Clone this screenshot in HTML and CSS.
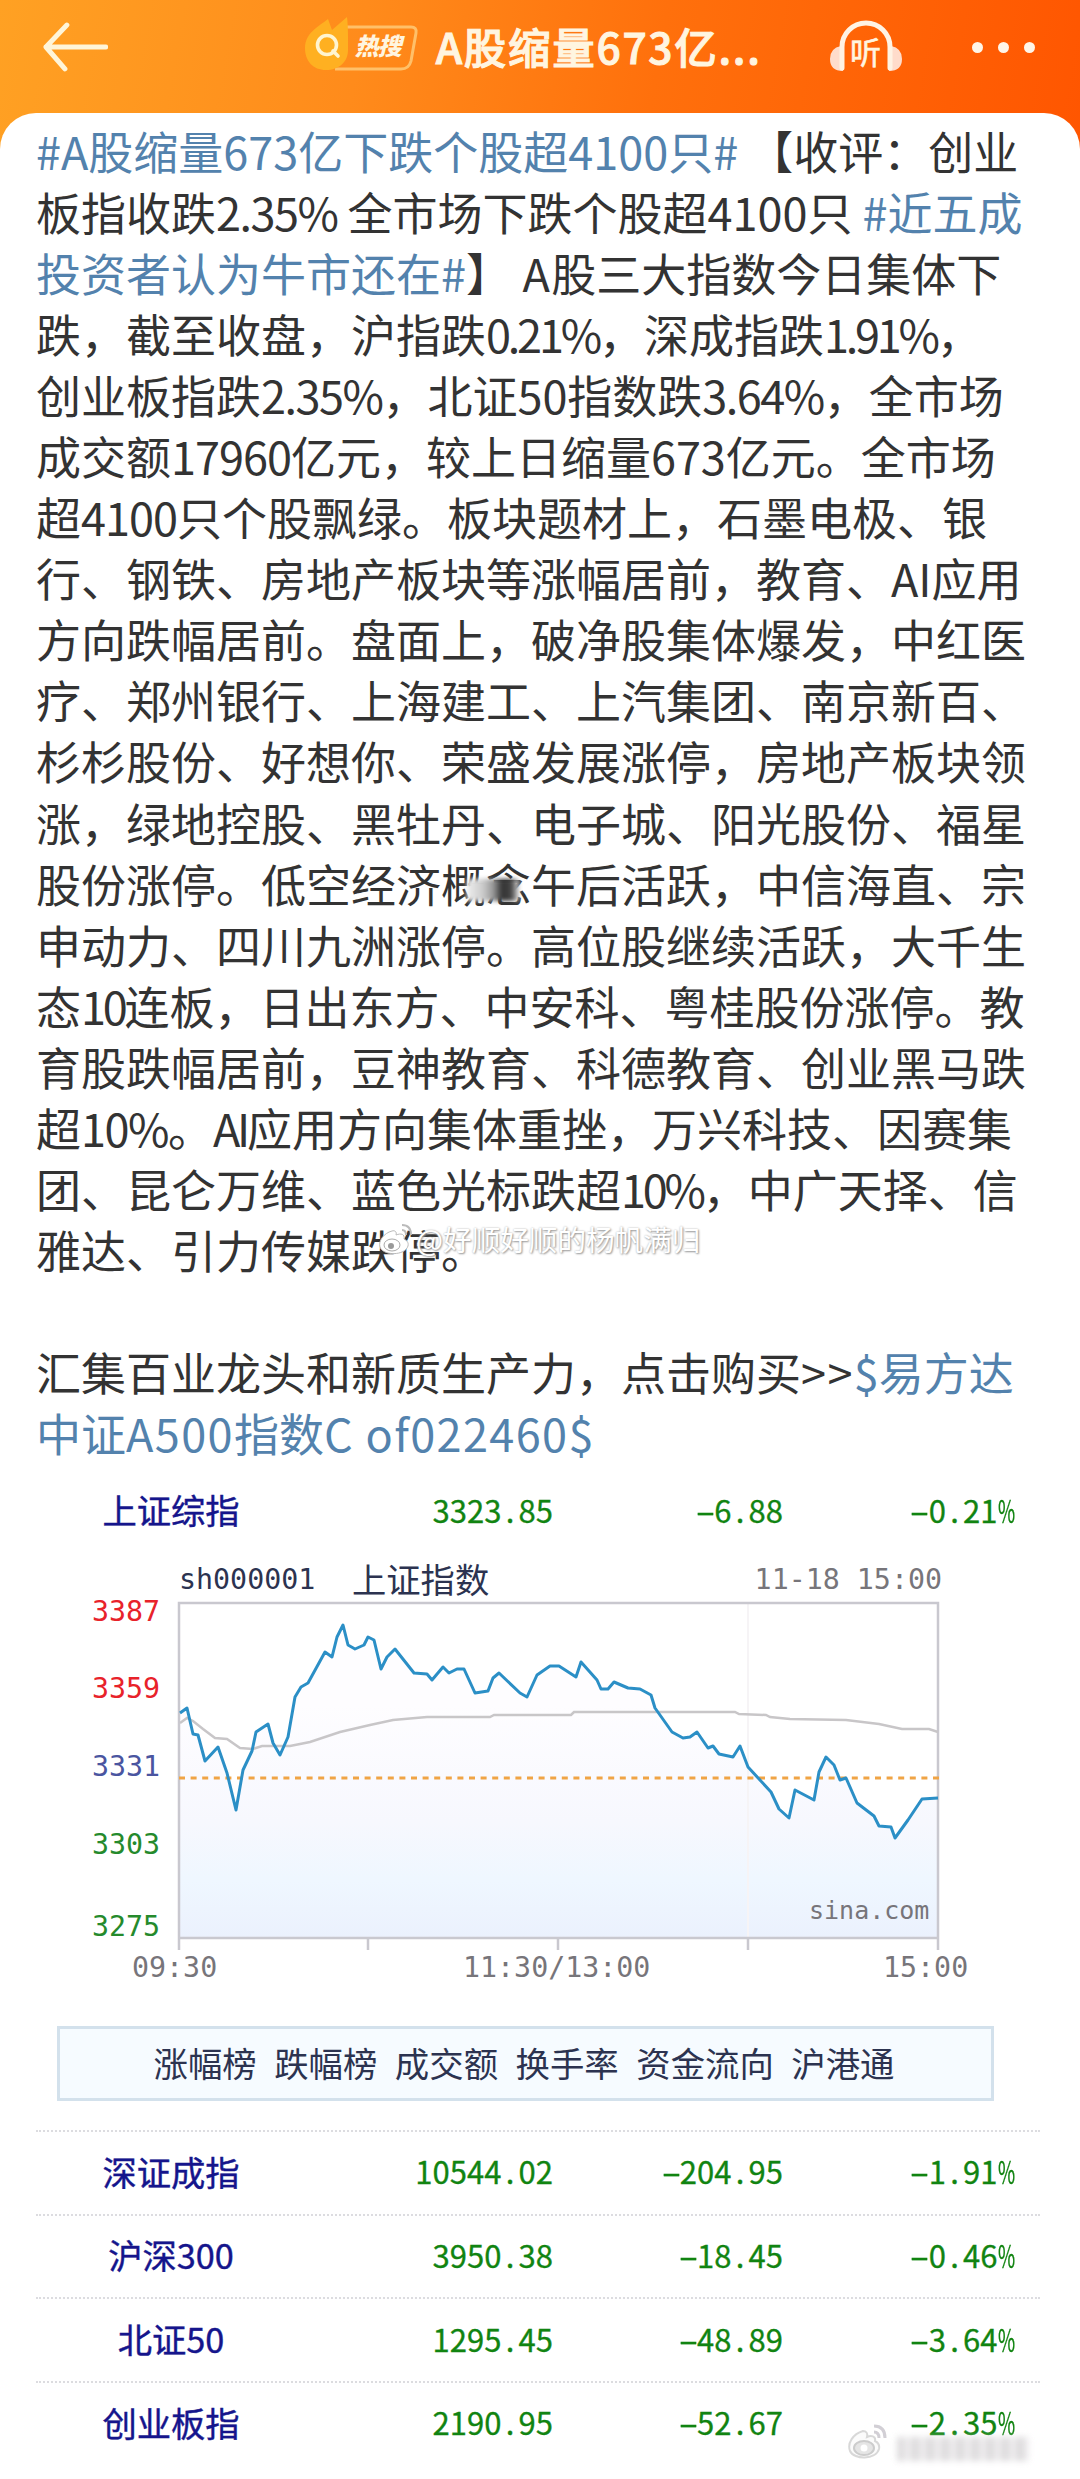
FILE: index.html
```html
<!DOCTYPE html>
<html lang="zh-CN">
<head>
    <meta charset="UTF-8">
    <meta name="viewport" content="width=device-width, initial-scale=1.0">
    <title>A股缩量673亿</title>
    <link rel="stylesheet" href="styles.css">
</head>
<body>

    <header class="topbar">
        <svg class="back" width="66" height="52" viewBox="0 0 66 52">
            <path d="M25 4 4 26l19 22M4 26h60" fill="none" stroke="#fff5d8" stroke-width="5" stroke-linecap="round" stroke-linejoin="round"/>
        </svg>
        <div class="hot">
            <svg width="114" height="56" viewBox="0 0 114 56">
                <path d="M40 11h66q6 0 5 6l-5 28q-2 8-10 8H30" fill="none" stroke="#ffc069" stroke-width="3"/>
                <path d="M23 3 27 14 42 1q1 8 1 20v13C43 46 34 54 21 54S0 45 0 32C0 17 13 11 23 3z" fill="#ffb021"/>
                <circle cx="22" cy="29" r="9.5" fill="none" stroke="#fff5d0" stroke-width="3.6"/>
                <path d="m28 35 5 5" stroke="#fff5d0" stroke-width="3.6" stroke-linecap="round"/>
            </svg>
            <span>热搜</span>
        </div>
        <h1>A股缩量673亿...</h1>
        <div class="listen">
            <svg width="74" height="56" viewBox="0 0 74 56">
                <path d="M12 28q-11 2-11 13 0 12 13 12zM62 28q11 2 11 13 0 12-13 12z" fill="#ffdccb"/>
                <path d="M13 50V29a24 24 0 0 1 48 0v21" fill="none" stroke="#fff3e4" stroke-width="5" stroke-linecap="round"/>
            </svg>
            <span>听</span>
        </div>
        <div class="more"><i></i><i></i><i></i></div>
    </header>

    <main class="sheet">
        <div class="post">
            <p><a>#A股缩量673亿下跌个股超4100只#</a> 【收评：创业</p>
            <p>板指收跌<b class="pct">2.35%</b> 全市场下跌个股超4100只 <a>#近五成</a></p>
            <p><a>投资者认为牛市还在#</a>】<b class="wide"> A</b>股三大指数今日集体下</p>
            <p>跌，截至收盘，沪指跌<b class="tight">0.21%</b>，深成指跌<b class="tight">1.91%</b>，</p>
            <p>创业板指跌<b class="pct">2.35%</b>，北证50指数跌<b class="pct">3.64%</b>，全市场</p>
            <p>成交额<b class="num1">17960</b>亿元，较上日缩量673亿元。全市场</p>
            <p>超<b class="num1">4100</b>只个股飘绿。板块题材上，石墨电极、银</p>
            <p>行、钢铁、房地产板块等涨幅居前，教育、AI应用</p>
            <p>方向跌幅居前。盘面上，破净股集体爆发，中红医</p>
            <p>疗、郑州银行、上海建工、上汽集团、南京新百、</p>
            <p>杉杉股份、好想你、荣盛发展涨停，房地产板块领</p>
            <p>涨，绿地控股、黑牡丹、电子城、阳光股份、福星</p>
            <p>股份涨停。低空经济<span class="smudge">概念</span>午后活跃，中信海直、宗</p>
            <p>申动力、四川九洲涨停。高位股继续活跃，大千生</p>
            <p>态<b class="tight">10</b>连板，日出东方、中安科、粤桂股份涨停。教</p>
            <p>育股跌幅居前，豆神教育、科德教育、创业黑马跌</p>
            <p>超<b class="pct">10%</b>。<b class="tight">AI</b>应用方向集体重挫，万兴科技、因赛集</p>
            <p>团、昆仑万维、蓝色光标跌超<b class="tight">10%</b>，中广天择、信</p>
            <p>雅达、引力传媒跌停。</p>
            <p>&nbsp;</p>
            <p>汇集百业龙头和新质生产力，点击购买<b class="wide">&gt;&gt;</b><a>$易方达</a></p>
            <p><a>中证<b class="wide">A500</b>指数<b class="wide">C of022460$</b></a></p>

            <div class="watermark">
                <svg width="38" height="34" viewBox="0 0 38 34">
                    <path d="M14 9C6 11 0 19 2 25c3 9 25 9 28-1 1-4-2-6-4-7 1-5-3-6-8-4 1-3-1-5-4-4z" fill="#fff" stroke="#bbb"/>
                    <ellipse cx="14" cy="23" rx="8" ry="6" fill="#fff" stroke="#aaa"/>
                    <circle cx="13" cy="24" r="3" fill="#999"/>
                    <path d="M24 3q9 0 9 10M24 8q4 0 4 5" fill="none" stroke="#bbb" stroke-width="2"/>
                </svg>
                <span>@好顺好顺的杨帆满归</span>
            </div>
        </div>

        <div class="row first">
            <span class="name">上证综指</span>
            <span class="num">3323<i>.</i>85</span>
            <span class="num"><i class="neg">-</i>6<i>.</i>88</span>
            <span class="num"><i class="neg">-</i>0<i>.</i>21<em>%</em></span>
        </div>

        <svg class="chart" width="1080" height="436" viewBox="0 0 1080 436">
            <defs>
                <linearGradient id="area" gradientUnits="userSpaceOnUse" x1="0" y1="150" x2="0" y2="383">
                    <stop offset="0" stop-color="#fefdff"/>
                    <stop offset=".5" stop-color="#f7f8fe"/>
                    <stop offset=".75" stop-color="#eff7ff"/>
                    <stop offset="1" stop-color="#ebf1fd"/>
                </linearGradient>
            </defs>
            <path d="M180 158 187 153 193 179 198 180 205 206 218 192 227 218 236 255 243 215 252 196 256 177 268 169 273 188 280 200 288 182 295 142 301 132 308 128 325 97 332 102 337 82 343 70 348 90 355 94 364 90 368 82 374 85 381 114 387 102 395 94 414 118 427 119 432 125 443 112 449 118 457 114 464 114 475 138 488 136 493 123 499 118 520 138 527 142 537 120 550 111 559 111 576 122 581 107 597 125 601 134 608 134 614 127 628 133 640 134 651 140 655 153 672 177 683 183 690 182 697 177 708 193 713 191 719 199 733 202 740 191 748 212 771 237 779 254 789 263 795 235 814 245 819 217 826 202 834 210 840 225 846 223 857 248 874 261 879 271 891 272 895 283 908 265 922 244 938 243V383H180z" fill="url(#area)"/>
            <path d="M748 48V383" stroke="#f6f4f6" stroke-width="2"/>
            <path d="M179 395V48H938V395M179 383H938M368 383v12M558 383v12M748 383v12" fill="none" stroke="#c9c8cf" stroke-width="2.5"/>
            <path d="M179 223H942" stroke="#f0a445" stroke-width="3" stroke-dasharray="6 5.6"/>
            <path d="M180 168 187 163 193 166 203 174 215 183 227 184 240 193 253 194 262 191 290 191 310 187 340 177 370 170 393 165 427 162 490 162 494 160 571 160 574 157 735 157 739 159 766 160 770 162 790 164 846 165 879 169 902 174 929 174 938 177" fill="none" stroke="#c8c6c8" stroke-width="2.5"/>
            <path d="M180 158 187 153 193 179 198 180 205 206 218 192 227 218 236 255 243 215 252 196 256 177 268 169 273 188 280 200 288 182 295 142 301 132 308 128 325 97 332 102 337 82 343 70 348 90 355 94 364 90 368 82 374 85 381 114 387 102 395 94 414 118 427 119 432 125 443 112 449 118 457 114 464 114 475 138 488 136 493 123 499 118 520 138 527 142 537 120 550 111 559 111 576 122 581 107 597 125 601 134 608 134 614 127 628 133 640 134 651 140 655 153 672 177 683 183 690 182 697 177 708 193 713 191 719 199 733 202 740 191 748 212 771 237 779 254 789 263 795 235 814 245 819 217 826 202 834 210 840 225 846 223 857 248 874 261 879 271 891 272 895 283 908 265 922 244 938 243" fill="none" stroke="#2b8fc6" stroke-width="3" stroke-linejoin="round"/>
            <g class="mono">
                <text x="179" y="34" fill="#2c3350">sh000001</text>
                <text class="cjk" x="352" y="38" fill="#2c3350">上证指数</text>
                <text x="942" y="34" text-anchor="end">11-18 15:00</text>
                <text x="92" y="66" fill="#e8222a">3387</text>
                <text x="92" y="143" fill="#e8222a">3359</text>
                <text x="92" y="221" fill="#4a55a0">3331</text>
                <text x="92" y="299" fill="#258a2c">3303</text>
                <text x="92" y="381" fill="#258a2c">3275</text>
                <text x="132" y="422">09:30</text>
                <text x="463" y="422">11:30/13:00</text>
                <text x="883" y="422">15:00</text>
                <text class="site" x="809" y="364">sina.com</text>
            </g>
        </svg>

        <nav class="tabs">
            <span>涨幅榜</span><span>跌幅榜</span><span>成交额</span><span>换手率</span><span>资金流向</span><span>沪港通</span>
        </nav>

        <div class="row">
            <span class="name">深证成指</span>
            <span class="num">10544<i>.</i>02</span>
            <span class="num"><i class="neg">-</i>204<i>.</i>95</span>
            <span class="num"><i class="neg">-</i>1<i>.</i>91<em>%</em></span>
        </div>
        <div class="row">
            <span class="name">沪深300</span>
            <span class="num">3950<i>.</i>38</span>
            <span class="num"><i class="neg">-</i>18<i>.</i>45</span>
            <span class="num"><i class="neg">-</i>0<i>.</i>46<em>%</em></span>
        </div>
        <div class="row">
            <span class="name">北证50</span>
            <span class="num">1295<i>.</i>45</span>
            <span class="num"><i class="neg">-</i>48<i>.</i>89</span>
            <span class="num"><i class="neg">-</i>3<i>.</i>64<em>%</em></span>
        </div>
        <div class="row">
            <span class="name">创业板指</span>
            <span class="num">2190<i>.</i>95</span>
            <span class="num"><i class="neg">-</i>52<i>.</i>67</span>
            <span class="num"><i class="neg">-</i>2<i>.</i>35<em>%</em></span>
            <div class="stamp">
                <svg width="42" height="38" viewBox="0 0 42 38">
                    <path d="M16 8C6 11 0 20 3 28c4 9 26 9 29-2 1-5-2-7-4-8 1-5-4-6-8-4 1-4-1-6-4-6z" fill="#fafafa" stroke="#ccc" stroke-width="2"/>
                    <ellipse cx="17" cy="25" rx="10" ry="7" fill="#ddd" stroke="#bbb" stroke-width="2"/>
                    <circle cx="17" cy="25" r="3.5" fill="#fff"/>
                    <path d="M27 3q11 0 11 12M27 9q5 0 5 6" fill="none" stroke="#c4c0c8" stroke-width="3"/>
                </svg>
                <div class="haze"></div>
            </div>
        </div>
    </main>

</body>
</html>
```
FILE: styles.css
```css
* {
    box-sizing: border-box;
}
body {
    margin: 0;
    font-family: "Noto Sans CJK SC", sans-serif;
    color: #333;
    background: linear-gradient(100deg, #ffa123 0%, #ff8b1b 33%, #ff700c 60%, #ff5500 100%) no-repeat #fff;
    background-size: 100% 200px;
}
.topbar {
    height: 113px;
    padding: 0 45px 0 42px;
    display: flex;
    align-items: flex-start;
    color: #fff5e0;
}
.back {
    margin-top: 21px;
}
.hot {
    position: relative;
    margin: 16px 0 0 197px;
    width: 114px;
    height: 56px;
}
.hot span {
    position: absolute;
    left: 50px;
    top: 11px;
    font-size: 24px;
    line-height: 36px;
    font-weight: 900;
    font-style: italic;
    letter-spacing: -1px;
}
h1 {
    margin: 15px 0 0 17px;
    width: 395px;
    font-size: 42.5px;
    line-height: 62px;
    font-weight: 500;
    letter-spacing: 1.7px;
    white-space: nowrap;
    -webkit-text-stroke: 1px #fff5e0;
}
.listen {
    position: relative;
    width: 74px;
    height: 56px;
    margin-top: 18px;
}
.listen span {
    position: absolute;
    left: 21px;
    top: 15px;
    font-size: 31px;
    line-height: 36px;
    -webkit-text-stroke: 0.6px #fff5e0;
}
.more {
    display: flex;
    gap: 15px;
    margin: 42px 0 0 69px;
}
.more i {
    width: 11px;
    height: 11px;
    border-radius: 50%;
    background: #fff5e8;
}
.sheet {
    background: #fff;
    border-radius: 36px 36px 0 0;
    padding-top: 7px;
    height: 2366px;
    overflow: hidden;
}

/* post text */
.post {
    position: relative;
    padding-left: 36px;
    margin-bottom: 4px;
    font-size: 45px;
    line-height: 61.05px;
    white-space: nowrap;
}
.post p {
    margin: 0;
    height: 61.05px;
}
.post a {
    color: #5382ad;
}
.post b {
    font-weight: normal;
}
.post .num1 {
    letter-spacing: -1px;
}
.post .pct {
    letter-spacing: -1.5px;
}
.post .tight {
    letter-spacing: -3.2px;
}
.post .wide {
    letter-spacing: 1.4px;
}
.smudge {
    position: relative;
}
.smudge::after {
    content: "";
    position: absolute;
    left: 26px;
    top: 28px;
    width: 52px;
    height: 22px;
    background: linear-gradient(90deg, #eee, #ccc 30%, #999 50%, #333 68%, #444 85%, #ddd);
    filter: blur(2px);
}
.watermark {
    position: absolute;
    left: 378px;
    top: 1100px;
    display: flex;
    align-items: center;
    color: #fff;
    font-size: 28.6px;
    line-height: 38px;
    text-shadow: 1px 1px 2px #999, 0 0 2px #bbb;
}

/* index rows */
.row {
    position: relative;
    display: grid;
    grid-template-columns: 270px 247px 230px 232px;
    align-items: center;
    width: 1004px;
    height: 83.6px;
    margin-left: 36px;
    padding-bottom: 4px;
    border-top: 2px dotted #dcdce0;
}
.row.first {
    height: 88px;
    border-top: none;
}
.name {
    text-align: center;
    font-size: 34.3px;
    color: #15158c;
    -webkit-text-stroke: 0.4px #15158c;
}
.num {
    text-align: right;
    font-size: 31px;
    color: #118411;
    -webkit-text-stroke: 0.3px #118411;
}
.num i, .num em {
    display: inline-block;
    width: 17.2px;
    font-style: normal;
    text-align: center;
}
.num .neg {
    transform: scaleX(1.9);
}
.num em {
    width: 28.5px;
    margin-right: -11px;
    transform: scaleX(0.6);
    transform-origin: left;
}
.chart {
    display: block;
}
.mono {
    font-family: "DejaVu Sans Mono", monospace;
    font-size: 28.3px;
    fill: #77757a;
}
.cjk {
    font-family: "Noto Sans CJK SC", sans-serif;
    font-size: 34.3px;
}
.site {
    font-size: 25px;
}
.tabs {
    display: flex;
    justify-content: center;
    gap: 17.5px;
    width: 937px;
    height: 75px;
    margin: 35px 0 29px 57px;
    padding-right: 3px;
    border: 3px solid #d3e1ec;
    background: #f6fbff;
    font-size: 34.4px;
    line-height: 67px;
    color: #2c3350;
}

/* faded mark in the last row */
.stamp {
    position: absolute;
    left: 811px;
    top: 40px;
    display: flex;
    align-items: flex-end;
    gap: 8px;
    opacity: 0.75;
}
.haze {
    width: 132px;
    height: 24px;
    background: repeating-linear-gradient(90deg, #d2d0d2 0 6px, #ebe9eb 9px 12px, #d8d6d8 15px);
    filter: blur(3px);
}
```
